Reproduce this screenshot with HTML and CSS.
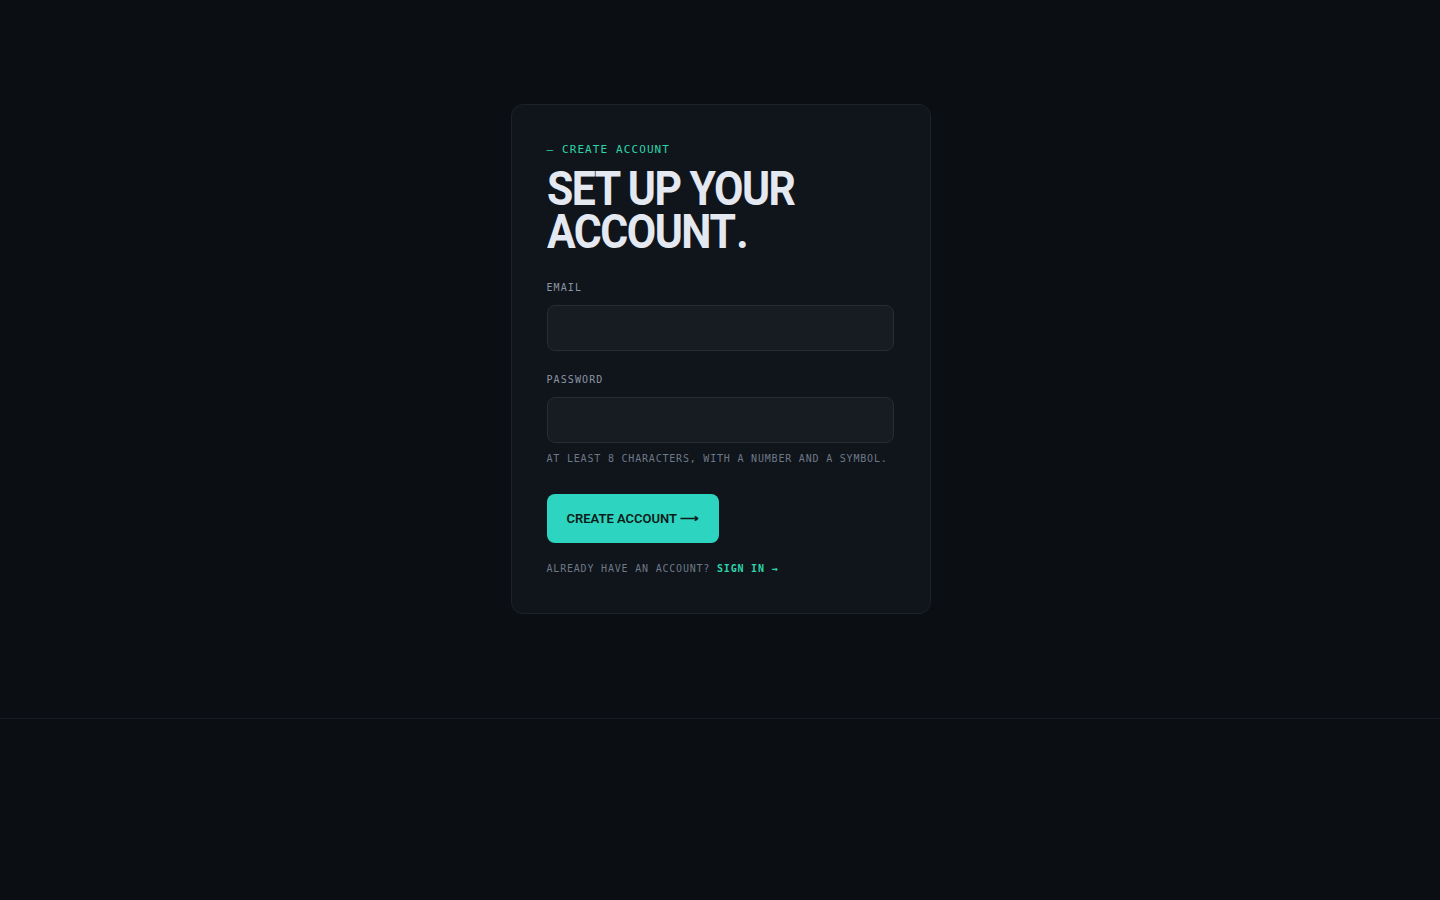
FILE: index.html
```html
<!DOCTYPE html>
<html lang="en">
<head>
<meta charset="utf-8">
<title>Create account</title>
<link rel="stylesheet" href="styles.css">
</head>
<body>
<main class="main">
  <section class="card">
    <p class="eyebrow">— CREATE ACCOUNT</p>
    <h1 class="title">SET UP YOUR<br>ACCOUNT<span class="dot">.</span></h1>
    <form class="form">
      <label class="label" for="email">EMAIL</label>
      <input class="input" id="email" type="email">
      <label class="label label-gap" for="password">PASSWORD</label>
      <input class="input" id="password" type="password">
      <p class="hint">AT LEAST 8 CHARACTERS, WITH A NUMBER AND A SYMBOL.</p>
      <button class="btn" type="button">CREATE ACCOUNT <span class="arrow">⟶</span></button>
    </form>
    <p class="alt">ALREADY HAVE AN ACCOUNT? <a class="link" href="#">SIGN IN →</a></p>
  </section>
</main>
<footer class="footer"></footer>
</body>
</html>
```
FILE: styles.css
```css
* { box-sizing: border-box; }
html, body { margin: 0; padding: 0; }
body {
  background: #0b0e13;
  color: #e4e8ef;
  font-family: Roboto, "Liberation Sans", sans-serif;
  min-height: 900px;
}
.main {
  height: 718px;
  display: flex;
  align-items: center;
  justify-content: center;
  padding-left: 1px;
}
.card {
  width: 420px;
  background: #10141b;
  border: 1px solid #1c222a;
  border-radius: 12px;
  padding: 37px 36px 37px 35px;
}
.eyebrow {
  margin: 0;
  font-family: "DejaVu Sans Mono", monospace;
  font-size: 11px;
  line-height: 16px;
  letter-spacing: 0.1em;
  color: #2dd4aa;
}
.title {
  margin: 9px 0 0;
  font-family: Roboto, sans-serif;
  font-weight: 700;
  font-size: 48px;
  line-height: 43px;
  letter-spacing: -0.035em;
  color: #e4e8f0;
  transform: scaleX(0.89);
  transform-origin: left center;
}
.dot { margin-left: 2px; }
.form { display: flex; flex-direction: column; margin-top: 27px; }
.label {
  font-family: "DejaVu Sans Mono", monospace;
  font-size: 10px;
  line-height: 14px;
  padding-top: 1px;
  letter-spacing: 0.11em;
  color: #8a95a3;
  margin-bottom: 10px;
}
.label-gap { margin-top: 21px; }
.input {
  height: 46px;
  width: 100%;
  background: #171c23;
  border: 1px solid #262d37;
  border-radius: 8px;
  color: #e4e8ef;
}
.hint {
  margin: 9px 0 0;
  font-family: "DejaVu Sans Mono", monospace;
  font-size: 10px;
  line-height: 14px;
  letter-spacing: 0.08em;
  color: #6d7987;
}
.btn {
  margin-top: 28px;
  align-self: flex-start;
  height: 49px;
  padding: 0 20px;
  background: #2dd4bf;
  border: none;
  border-radius: 8px;
  color: #0c1a18;
  font-family: Roboto, sans-serif;
  font-weight: 600;
  font-size: 13px;
  letter-spacing: 0;
}
.arrow { font-size: 13px; }
.alt {
  margin: 19px 0 0;
  font-family: "DejaVu Sans Mono", monospace;
  font-size: 10px;
  line-height: 14px;
  letter-spacing: 0.08em;
  color: #6d7987;
}
.link {
  color: #2dd4aa;
  font-weight: bold;
  text-decoration: none;
}
.footer {
  border-top: 1px solid #161b22;
  height: 182px;
}
```
